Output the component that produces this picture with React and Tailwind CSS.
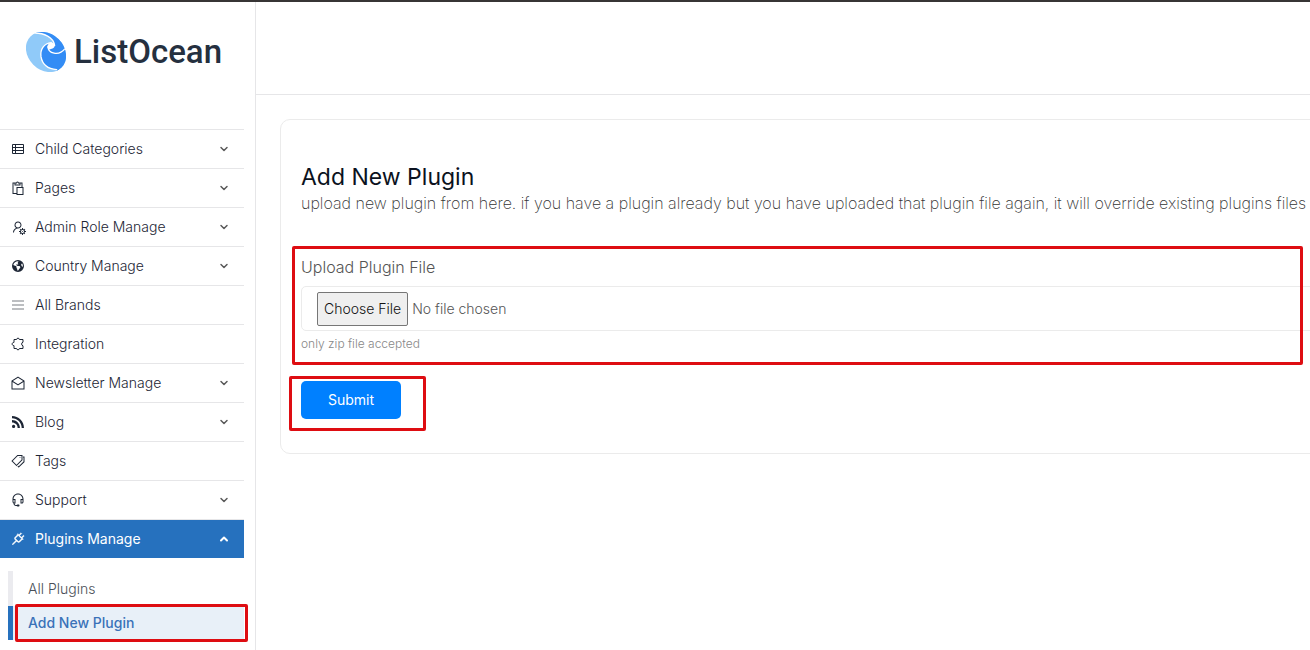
import React from "react";
import {
  LiaPasteSolid,
  LiaUserCogSolid,
  LiaEnvelopeOpen,
  LiaTagsSolid,
  LiaHeadsetSolid,
  LiaPlugSolid,
} from "react-icons/lia";
import { FaEarthAmericas } from "react-icons/fa6";
import { FiChevronDown, FiChevronUp } from "react-icons/fi";
import { ImRss } from "react-icons/im";

const navItems = [
  { label: "Child Categories", icon: ListTableIcon, expandable: true },
  { label: "Pages", icon: LiaPasteSolid, expandable: true },
  { label: "Admin Role Manage", icon: LiaUserCogSolid, expandable: true },
  { label: "Country Manage", icon: FaEarthAmericas, small: true, expandable: true },
  { label: "All Brands", icon: LinesIcon },
  { label: "Integration", icon: PuzzleIcon },
  { label: "Newsletter Manage", icon: LiaEnvelopeOpen, expandable: true },
  { label: "Blog", icon: ImRss, small: true, expandable: true },
  { label: "Tags", icon: LiaTagsSolid },
  { label: "Support", icon: LiaHeadsetSolid, expandable: true },
];

function ListTableIcon({ className }) {
  return (
    <svg viewBox="0 0 16 16" className={className} fill="none" stroke="currentColor" aria-hidden="true">
      <path d="M2.5 3.5h11v9h-11zM2.5 6.5h11M2.5 9.5h11M5.5 3.5v9" />
    </svg>
  );
}

function LinesIcon({ className }) {
  return (
    <svg viewBox="0 0 16 16" className={className} fill="#bcbec1" aria-hidden="true">
      <rect x="2" y="3" width="12" height="2" />
      <rect x="2" y="7" width="12" height="2" />
      <rect x="2" y="11" width="12" height="2" />
    </svg>
  );
}

function PuzzleIcon({ className }) {
  return (
    <svg viewBox="0 0 16 16" className={className} fill="none" stroke="currentColor" strokeLinejoin="round" aria-hidden="true">
      <path d="M4 3.500h2.600C6.600 1.700 9.400 1.700 9.400 3.500H13v2.700C11.200 6.200 11.200 9.800 13 9.800v2.700H9.400C9.400 14.300 6.600 14.300 6.600 12.500H4V9.600C1.500 9.600 1.500 6.400 4 6.400Z" />
    </svg>
  );
}

function WaveLogo() {
  return (
    <svg viewBox="0 0 120 120" className="size-10" aria-hidden="true">
      <defs>
        <clipPath id="disc">
          <ellipse cx="60" cy="60" rx="66" ry="54" transform="rotate(45 60 60)" />
        </clipPath>
      </defs>
      <g clipPath="url(#disc)">
        <rect width="120" height="120" fill="#90caf9" />
        <path d="M20 0C50 2 80 14 87 38L66 34C48 42 42 60 45 76C50 98 66 110 92 113V120H120V0Z" fill="#338cf5" />
        <g fill="none" stroke="#fff" strokeWidth="4" strokeLinecap="round">
          <path d="M26 3C54 3 82 16 86 40" />
          <path d="M76 32C54 34 42 52 45 74C49 98 66 111 92 113" />
          <path d="M66 44C66 64 98 74 117 50" />
        </g>
        <path d="M64 46C64 36 72 31 79 32C85 33 88 38 86 43C84 49 79 51 74 51C70 54 68 53 64 46Z" fill="#fff" />
      </g>
    </svg>
  );
}

function NavItem({ label, icon: Icon, small, expandable }) {
  return (
    <li className="border-t border-[#e6e6e8]">
      <a href="#" className="flex h-[38px] items-center gap-[9px] pl-2.5 pr-[14px] text-[#1d2635]">
        <span className="flex size-4 shrink-0 items-center justify-center">
          <Icon className={small ? "size-3" : "size-4"} />
        </span>
        <span className="flex-1">{label}</span>
        {expandable && <FiChevronDown className="size-3 text-[#5a5a5a]" strokeWidth={3} />}
      </a>
    </li>
  );
}

function Highlight({ className }) {
  return (
    <span
      aria-hidden="true"
      className={`pointer-events-none absolute rounded-xs border-3 border-[#de0d12] ${className}`}
    />
  );
}

function Sidebar() {
  return (
    <aside className="w-64 shrink-0 border-r border-[#e6e6e8] pr-[11px]">
      <a href="#" className="flex h-[127px] items-start gap-2 pl-[26px] pt-[30px]">
        <WaveLogo />
        <span className="font-[Roboto] text-[33px] leading-10 font-medium text-[#25303f]">ListOcean</span>
      </a>
      <nav className="text-sm">
        <ul>
          {navItems.map((item) => (
            <NavItem key={item.label} {...item} />
          ))}
          <li className="border-t border-[#e6e6e8]">
            <a
              href="#"
              className="flex h-[38px] items-center gap-[9px] bg-[#2671be] pl-2.5 pr-[14px] font-normal text-white"
            >
              <LiaPlugSolid className="size-4 shrink-0" strokeWidth={1} />
              <span className="flex-1">Plugins Manage</span>
              <FiChevronUp className="size-3" strokeWidth={4} />
            </a>
            <ul className="pl-2 pt-[13px]">
              <li>
                <a href="#" className="flex h-[35px] items-center border-l-5 border-[#ebebef] pl-[15px] text-[#4a4f57]">
                  All Plugins
                </a>
              </li>
              <li className="relative">
                <a
                  href="#"
                  className="flex h-[34px] items-center border-l-5 border-[#2671be] bg-[#e8f0f8] pl-[15px] font-medium text-[#3a72b8]"
                >
                  Add New Plugin
                </a>
                <Highlight className="-top-0.5 -right-1 -bottom-0.5 left-[7px]" />
              </li>
            </ul>
          </li>
        </ul>
      </nav>
    </aside>
  );
}

export default function App() {
  return (
    <div className="flex min-h-screen overflow-hidden border-t-2 border-[#373535] bg-white font-[Inter,sans-serif] font-light">
      <Sidebar />
      <div className="min-w-0 flex-1">
        <header className="h-[93px] border-b border-[#e6e6e8]" />
        <main className="pl-6 pt-6">
          <section className="-mr-8 rounded-[10px] border border-[#ebebeb] px-5 pt-[43px] pb-[34px]">
            <h1 className="text-[23px] leading-7 font-normal text-[#0b1220]">Add New Plugin</h1>
            <p className="leading-6 font-extralight whitespace-nowrap text-[#333]">
              upload new plugin from here. if you have a plugin already but you have uploaded that plugin file again, it
              will override existing plugins files
            </p>
            <form className="pt-10" onSubmit={(event) => event.preventDefault()}>
              <div className="relative">
                <label htmlFor="plugin-file" className="mb-[7px] block leading-6 text-[#555]">
                  Upload Plugin File
                </label>
                <input
                  id="plugin-file"
                  type="file"
                  accept=".zip"
                  className="block h-[45px] w-full rounded-[5px] border border-[#ebebeb] px-[15px] py-[5px] text-sm text-[#555] file:h-[34px] file:rounded-xs file:border file:border-[#767676] file:bg-[#efefef] file:px-1.5 file:text-[#111]"
                />
                <small className="mt-[3px] block text-xs leading-5 text-[#888]">only zip file accepted</small>
                <Highlight className="-top-[9px] right-[18px] -bottom-[11px] -left-[9px]" />
              </div>
              <div className="relative mt-[27px] w-[100px]">
                <button
                  type="submit"
                  className="block h-[38px] w-full rounded-[5px] bg-[#0080ff] text-sm font-normal text-white"
                >
                  Submit
                </button>
                <Highlight className="-top-[5px] -right-[25px] -bottom-3 -left-3" />
              </div>
            </form>
          </section>
        </main>
      </div>
    </div>
  );
}
